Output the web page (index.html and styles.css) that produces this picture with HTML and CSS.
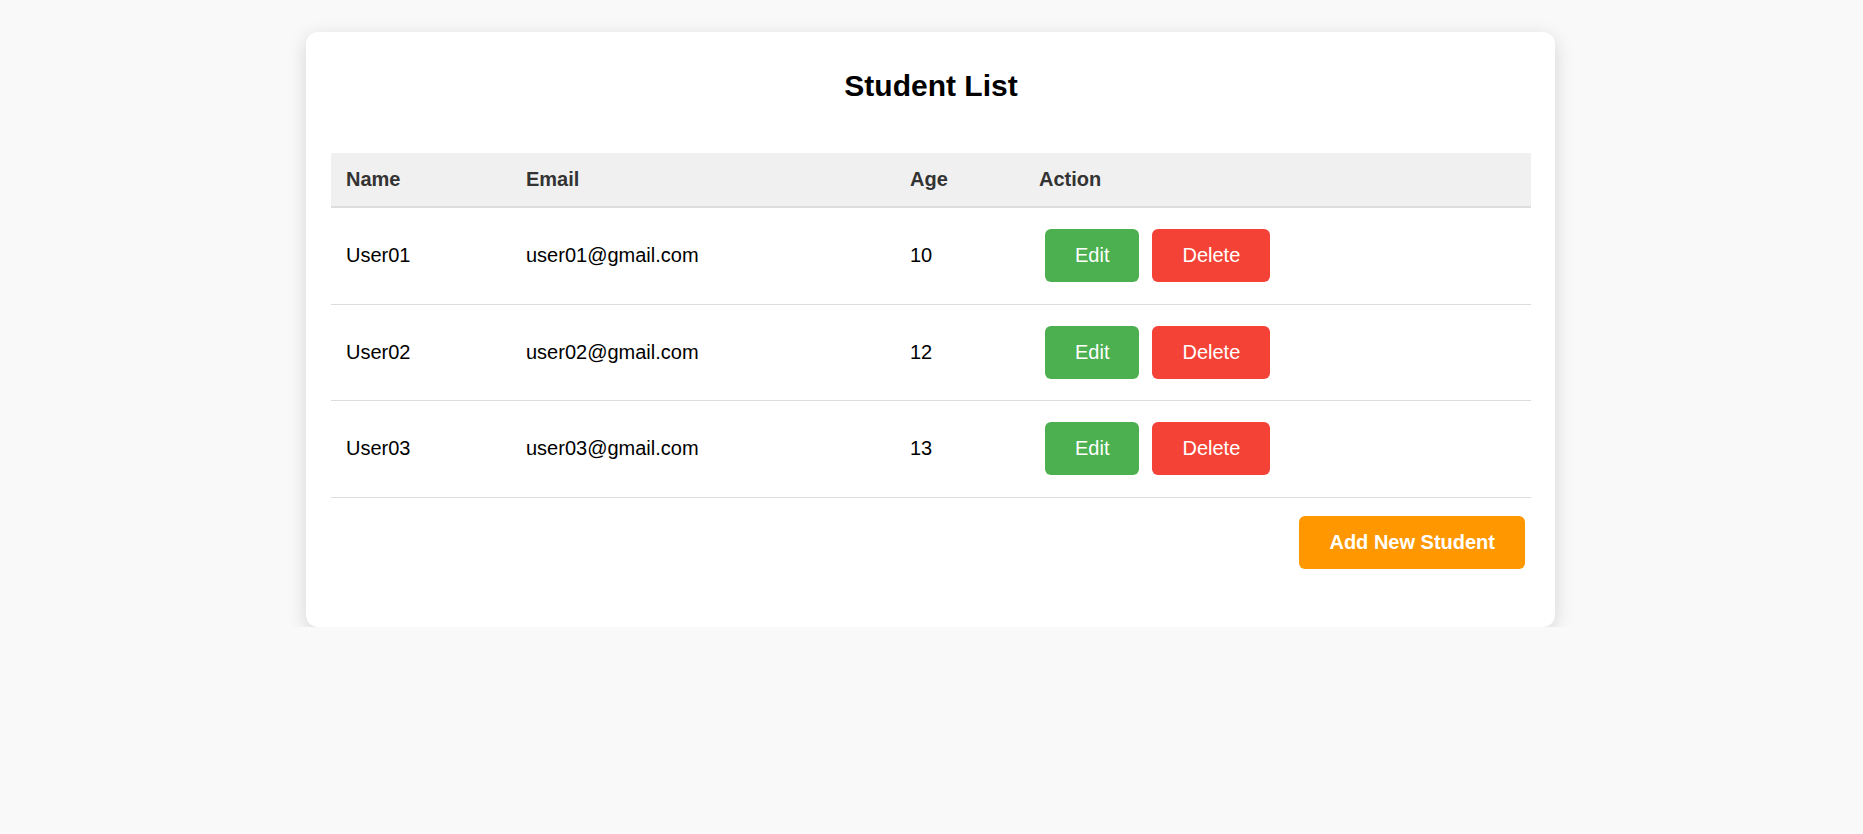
FILE: index.html
```html
<!DOCTYPE html>
<html lang="en">
<head>
<meta charset="utf-8">
<title>Student List</title>
<link rel="stylesheet" href="styles.css">
</head>
<body>
  <div class="card">
    <h2 class="title">Student List</h2>
    <table class="students">
      <colgroup>
        <col class="col-name">
        <col class="col-email">
        <col class="col-age">
        <col class="col-action">
      </colgroup>
      <thead>
        <tr>
          <th>Name</th>
          <th>Email</th>
          <th>Age</th>
          <th>Action</th>
        </tr>
      </thead>
      <tbody>
        <tr>
          <td>User01</td>
          <td>user01@gmail.com</td>
          <td>10</td>
          <td><div class="actions"><button class="btn btn-edit">Edit</button><button class="btn btn-delete">Delete</button></div></td>
        </tr>
        <tr>
          <td>User02</td>
          <td>user02@gmail.com</td>
          <td>12</td>
          <td><div class="actions"><button class="btn btn-edit">Edit</button><button class="btn btn-delete">Delete</button></div></td>
        </tr>
        <tr>
          <td>User03</td>
          <td>user03@gmail.com</td>
          <td>13</td>
          <td><div class="actions"><button class="btn btn-edit">Edit</button><button class="btn btn-delete">Delete</button></div></td>
        </tr>
      </tbody>
    </table>
    <div class="footer">
      <button class="btn btn-add">Add New Student</button>
    </div>
  </div>
</body>
</html>
```

FILE: styles.css
```css
* {
  box-sizing: border-box;
}

body {
  margin: 0;
  padding: 32px 2px 0 0;
  background: #f9f9f9;
  font-family: "Liberation Sans", Arial, sans-serif;
  color: #000;
}

.card {
  width: 1249px;
  margin: 0 auto;
  padding: 25px 24px 25px 25px;
  background: #fff;
  border-radius: 12px;
  box-shadow: 0 5px 19px rgba(0, 0, 0, 0.15);
}

.title {
  margin: 12px 0 0;
  font-size: 30px;
  line-height: 34px;
  font-weight: bold;
  text-align: center;
  color: #000;
}

.students {
  width: 100%;
  border-collapse: collapse;
  margin-top: 50px;
  font-size: 20px;
  table-layout: fixed;
}

.col-name { width: 180px; }
.col-email { width: 384px; }
.col-age { width: 129px; }
.col-action { width: auto; }

.students th {
  background: #f0f0f0;
  color: #333;
  text-align: left;
  font-weight: bold;
  padding: 15px;
  line-height: 23px;
  border-bottom: 2px solid #ddd;
}

.students td {
  padding: 15px;
  line-height: 23px;
  border-bottom: 1px solid #ddd;
  vertical-align: middle;
}

.actions {
  display: flex;
  gap: 13px;
  padding: 6px 0 6.5px 6px;
}

.btn {
  border: none;
  border-radius: 6px;
  color: #fff;
  font-family: "Liberation Sans", Arial, sans-serif;
  font-size: 20px;
  line-height: 23px;
  padding: 15px 30px;
  cursor: pointer;
}

.btn-edit {
  background: #4caf50;
}

.btn-delete {
  background: #f44336;
}

.footer {
  display: flex;
  justify-content: flex-end;
  padding: 18px 6px 33px 0;
}

.btn-add {
  background: #ff9800;
  font-weight: bold;
}
```
